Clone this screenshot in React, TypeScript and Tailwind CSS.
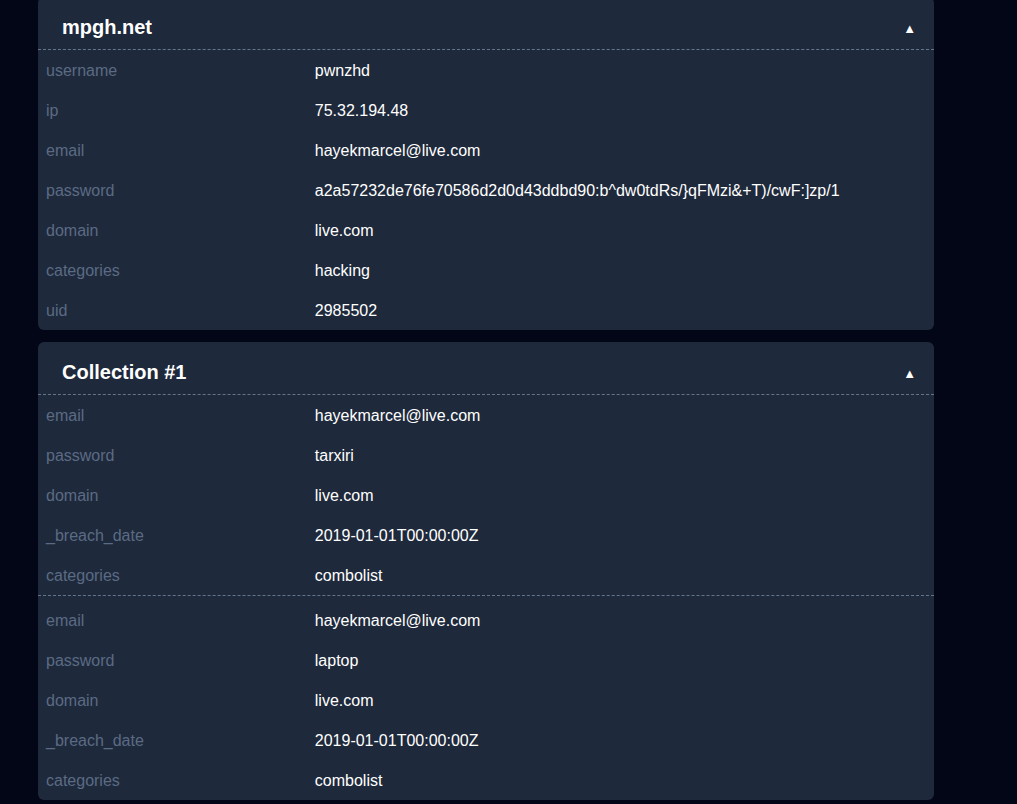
import React from "react";

type Row = [string, string];

const mpgh: Row[][] = [
  [
    ["username", "pwnzhd"],
    ["ip", "75.32.194.48"],
    ["email", "hayekmarcel@live.com"],
    ["password", "a2a57232de76fe70586d2d0d43ddbd90:b^dw0tdRs/}qFMzi&+T)/cwF:]zp/1"],
    ["domain", "live.com"],
    ["categories", "hacking"],
    ["uid", "2985502"],
  ],
];

const collection: Row[][] = [
  [
    ["email", "hayekmarcel@live.com"],
    ["password", "tarxiri"],
    ["domain", "live.com"],
    ["_breach_date", "2019-01-01T00:00:00Z"],
    ["categories", "combolist"],
  ],
  [
    ["email", "hayekmarcel@live.com"],
    ["password", "laptop"],
    ["domain", "live.com"],
    ["_breach_date", "2019-01-01T00:00:00Z"],
    ["categories", "combolist"],
  ],
];

function BreachCard({ title, groups }: { title: string; groups: Row[][] }) {
  return (
    <section className="overflow-hidden rounded-md bg-[#1e293b]">
      <div className="flex items-center justify-between border-b border-dashed border-[#64748b] pb-2 pl-6 pr-[18px] pt-4">
        <h3 className="text-xl leading-7 font-bold text-white">{title}</h3>
        <span className="pt-[3px] text-[13px] leading-none text-white">▲</span>
      </div>
      {groups.map((rows, gi) => (
        <div
          key={gi}
          className={gi > 0 ? "border-t border-dashed border-[#64748b] pt-1" : ""}
        >
          <table className="w-full border-collapse">
            <tbody>
              {rows.map(([k, v]) => (
                <tr key={k}>
                  <td className="w-[30%] px-2 pb-[7px] pt-[9px] text-base leading-6 text-[#5b6b84]">
                    {k}
                  </td>
                  <td className="px-2 pb-[7px] pt-[9px] text-base leading-6 text-white">
                    {v}
                  </td>
                </tr>
              ))}
            </tbody>
          </table>
        </div>
      ))}
    </section>
  );
}

export default function App() {
  return (
    <div className="min-h-screen bg-[#020617] font-['Liberation_Sans',Arial,sans-serif]">
      <div className="-mt-[3px] ml-[38px] flex w-[896px] flex-col gap-3 pb-6">
        <BreachCard title="mpgh.net" groups={mpgh} />
        <BreachCard title="Collection #1" groups={collection} />
      </div>
    </div>
  );
}
